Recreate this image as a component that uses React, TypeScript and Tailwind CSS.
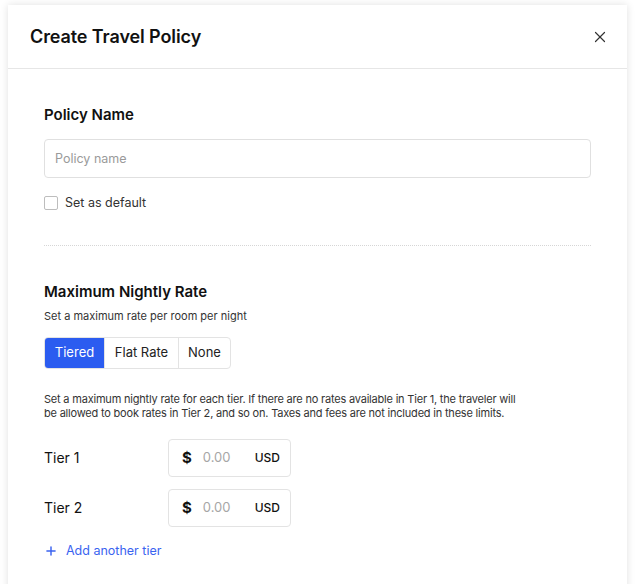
import { X, Plus } from "lucide-react";

const TIERS = ["Tier 1", "Tier 2"];

function TierRow({ label }: { label: string }) {
  return (
    <div className="flex items-center">
      <div className="w-[124px] text-[14px] text-[#111]">{label}</div>
      <div className="flex h-[38px] w-[123px] items-center rounded-[4px] border border-[#e3e3e3] bg-white pl-[13px] pr-[10px]">
        <span className="text-[15px] font-bold text-[#111]">$</span>
        <span className="ml-[11px] text-[13px] text-[#a6a6a6]">0.00</span>
        <span className="ml-auto text-[12px] font-medium text-[#111]">USD</span>
      </div>
    </div>
  );
}

export default function App() {
  return (
    <div
      className="h-[584px] overflow-hidden bg-white pl-[8px] pt-[5px]"
      style={{ fontFamily: "Inter, 'Noto Sans', sans-serif" }}
    >
      <div className="h-[600px] w-[619px] bg-white shadow-[0_0_8px_rgba(0,0,0,0.12)]">
        <header className="flex h-[64px] items-center justify-between border-b border-[#e6e6e6] pl-[22px] pr-[18px]">
          <h1 className="text-[18px] font-semibold tracking-[-0.1px] text-[#111]">Create Travel Policy</h1>
          <X className="h-[18px] w-[18px] text-[#333]" strokeWidth={1.6} />
        </header>

        <div className="px-[36px] pt-[36px]">
          <h2 className="text-[15px] font-semibold leading-[20px] text-[#111]">Policy Name</h2>
          <input
            className="mt-[14px] h-[39px] w-full rounded-[4px] border border-[#e0e0e0] px-[10px] text-[12.5px] outline-none placeholder:text-[#9a9a9a]"
            placeholder="Policy name"
          />
          <label className="mt-[16px] flex items-center gap-[7px]">
            <span className="h-[14px] w-[14px] rounded-[2px] border border-[#bdbdbd] bg-white" />
            <span className="text-[12.5px] text-[#333]">Set as default</span>
          </label>

          <div className="mt-[32px] border-t border-dotted border-[#d6d6d6]" />

          <h2 className="mt-[36px] text-[15px] font-semibold leading-[20px] text-[#111]">Maximum Nightly Rate</h2>
          <p className="mt-[7px] text-[11px] leading-[14px] text-[#333]">Set a maximum rate per room per night</p>

          <div className="mt-[14px] flex h-[32px] w-fit overflow-hidden rounded-[4px] border border-[#e3e3e3] text-[13px]">
            <button className="w-[59px] bg-[#2b5cf0] text-white">Tiered</button>
            <button className="w-[74px] border-l border-[#e3e3e3] text-[#222]">Flat Rate</button>
            <button className="w-[52px] border-l border-[#e3e3e3] text-[#222]">None</button>
          </div>

          <p className="mt-[23px] w-[500px] text-[11px] leading-[14.5px] tracking-[-0.2px] text-[#333]">
            Set a maximum nightly rate for each tier. If there are no rates available in Tier 1, the traveler will
            <br />
            be allowed to book rates in Tier 2, and so on. Taxes and fees are not included in these limits.
          </p>

          <div className="mt-[18px] flex flex-col gap-[12px]">
            {TIERS.map((t) => (
              <TierRow key={t} label={t} />
            ))}
          </div>

          <button className="mt-[15px] flex items-center gap-[8px] text-[12.5px] text-[#3a63f0]">
            <Plus className="h-[14px] w-[14px]" strokeWidth={2.5} />
            Add another tier
          </button>
        </div>
      </div>
    </div>
  );
}
